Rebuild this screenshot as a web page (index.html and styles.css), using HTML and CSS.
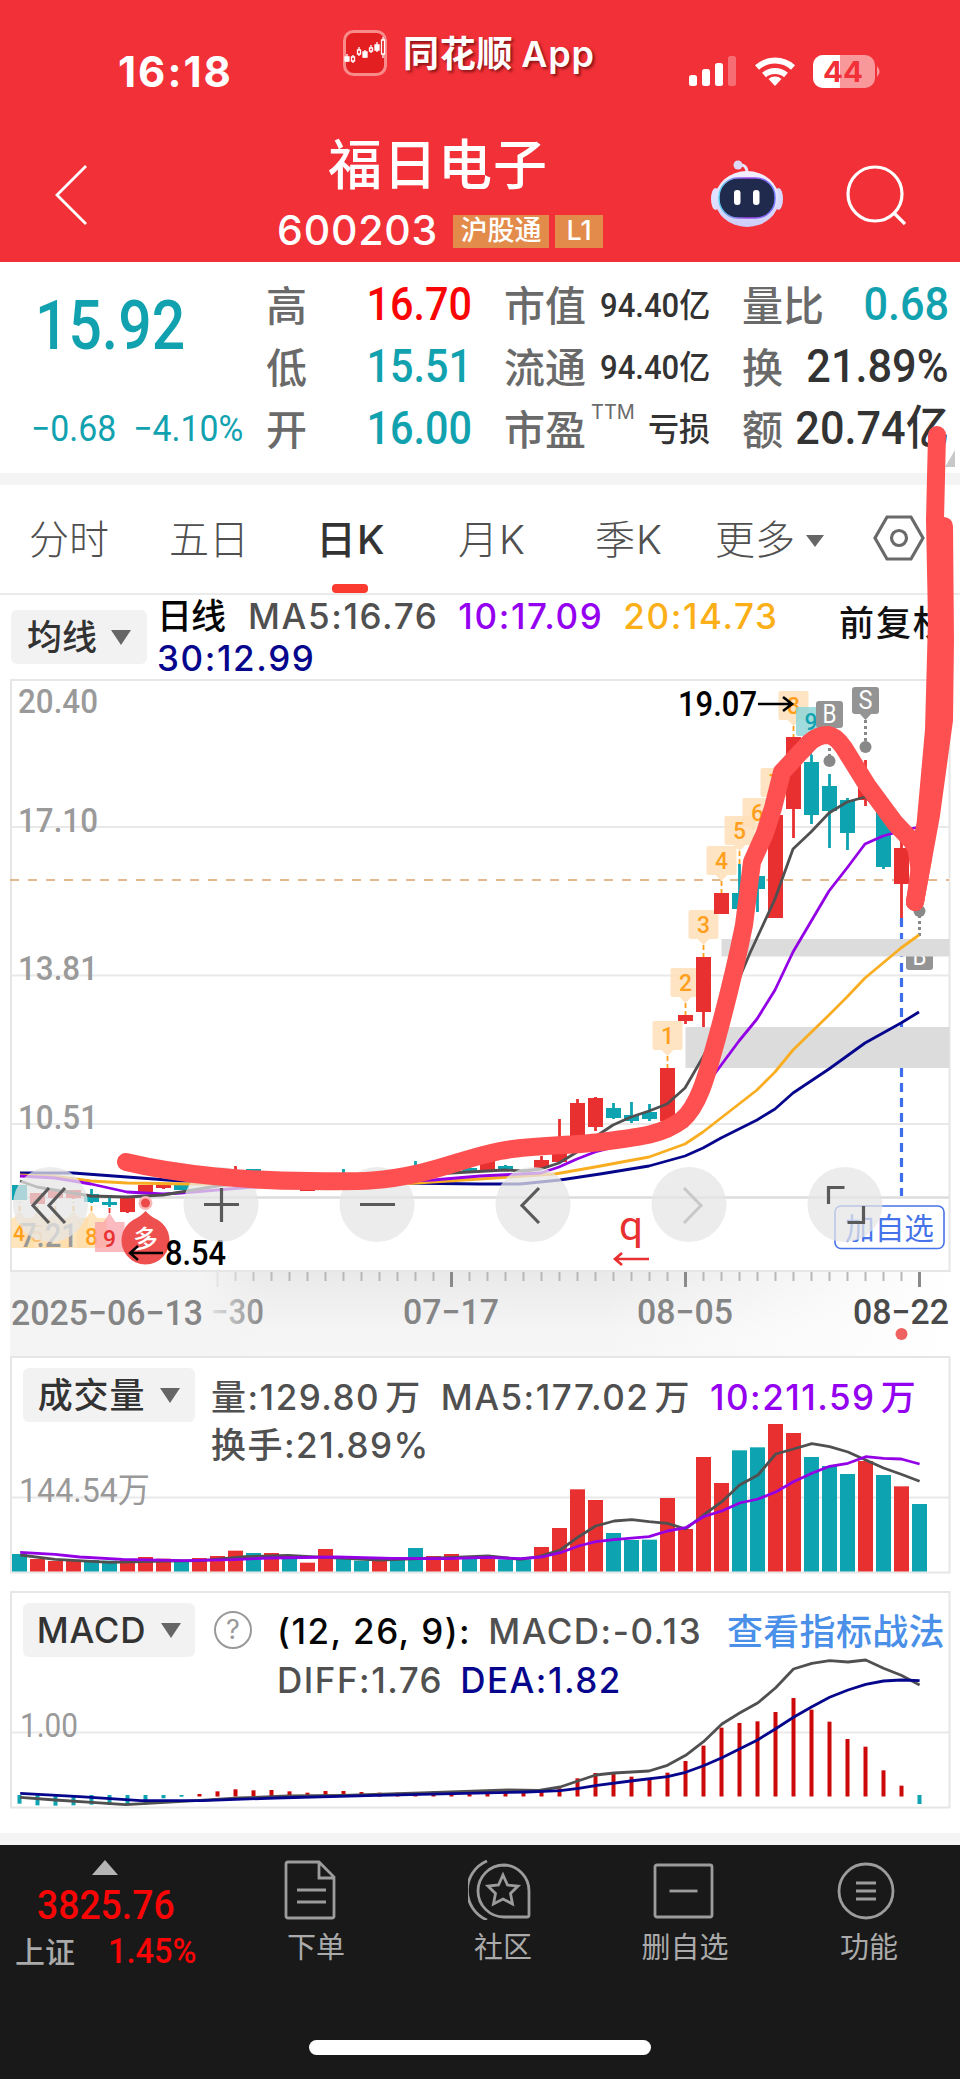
FILE: index.html
```html
<!DOCTYPE html>
<html lang="zh-CN">
<head>
<meta charset="utf-8">
<title>福日电子 600203</title>
<link rel="stylesheet" href="styles.css">
</head>
<body>
<div class="page">
  <header class="header">
    <div class="status">
      <div class="clock">16:18</div>
      <div class="brand">
        <svg class="brand-icon" viewBox="0 0 44 46"><rect x="1.5" y="1.5" width="41" height="43" rx="9" fill="#e31f22" stroke="#f98b8b" stroke-width="3"/><g stroke="#fff" stroke-width="1.3" fill="#e31f22"><path d="M4 24v8M10 25v8M16 17v9M22 20v8M28 15v8M34 12v10M40 7v21"/><path fill="#fff" d="M2 27h4v4H2zM20 22h4v5h-4zM32 15h4v5h-4z"/><path d="M8.500 27h3v4h-3zM14.500 20h3v4h-3zM26.500 18h3v3h-3zM38.500 10h3v14h-3z"/></g></svg>
        <span class="brand-name">同花顺 App</span>
      </div>
      <svg class="status-icons" viewBox="0 0 194 34">
        <g fill="#fff"><rect x="0" y="20" width="8" height="11" rx="2.500"/><rect x="13" y="14" width="8" height="17" rx="2.500"/><rect x="26" y="8" width="8" height="23" rx="2.500"/><rect x="39" y="1" width="8" height="30" rx="2.500" opacity=".3"/></g>
        <g fill="none" stroke="#fff" stroke-width="6"><path d="M68 12.500a27 27 0 0 1 36 0"/><path d="M75 20a17 17 0 0 1 22 0"/></g><path d="M79.500 24a10 10 0 0 1 13 0L86 31z" fill="#fff"/>
        <rect x="124" y="0" width="62" height="33" rx="10" fill="#fff" opacity=".5"/><path d="M151 0h-17a10 10 0 0 0-10 10v13a10 10 0 0 0 10 10h17z" fill="#fff"/><path d="M188 11q5 5.500 0 11z" fill="#fff" opacity=".5"/>
        <text x="134" y="26.500" font-family="Inter" font-size="28" font-weight="700" fill="#f23037" textLength="40" lengthAdjust="spacingAndGlyphs">44</text>
      </svg>
    </div>
    <div class="titlebar">
      <svg class="back" viewBox="0 0 36 62"><path d="M33 2L4 31l29 29" fill="none" stroke="#fff" stroke-width="2.800"/></svg>
      <div class="title">
        <div class="stock">福日电子</div>
        <div class="code-row"><span class="code">600203</span><span class="badge">沪股通</span><span class="badge badge-level">L1</span></div>
      </div>
      <svg class="robot" viewBox="0 0 74 68">
        <defs><linearGradient id="shell" x2="0" y2="1"><stop stop-color="#f4f0ff"/><stop offset="1" stop-color="#cdcdf8"/></linearGradient><linearGradient id="rim"><stop stop-color="#62d2f2"/><stop offset=".5" stop-color="#a044e8"/><stop offset="1" stop-color="#717cff"/></linearGradient></defs>
        <path d="M37 13q0-9-8-8" fill="none" stroke="#e9e4ff" stroke-width="3"/><circle cx="28" cy="5" r="4.500" fill="#dcdaf8"/>
        <ellipse cx="5.500" cy="39" rx="4.500" ry="11" fill="#e1dfff"/><ellipse cx="68.500" cy="39" rx="4.500" ry="11" fill="#d8d7fc"/>
        <ellipse cx="37" cy="39" rx="32" ry="28" fill="url(#shell)"/><rect x="9" y="18" width="56" height="40" rx="19" fill="#202a4c" stroke="url(#rim)" stroke-width="1.500"/><rect x="24" y="30" width="6.500" height="15" rx="3" fill="#fff"/><rect x="43" y="30" width="6.500" height="15" rx="3" fill="#fff"/>
      </svg>
      <svg class="search" viewBox="0 0 62 62"><g fill="none" stroke="#fff" stroke-width="3.200"><circle cx="29" cy="29" r="27"/><path d="M48 48l11 11"/></g></svg>
    </div>
  </header>

  <section class="quote">
    <div class="price-block">
      <div class="price num">15.92</div>
      <div class="change"><span>−0.68</span><span>−4.10%</span></div>
    </div>
    <div class="stats">
      <div class="stat s1"><span class="k">高</span><b class="num up">16.70</b></div>
      <div class="stat s2"><span class="k">市值</span><span class="small">94.40亿</span></div>
      <div class="stat s3"><span class="k">量比</span><b class="num down">0.68</b></div>
      <div class="stat s1"><span class="k">低</span><b class="num down">15.51</b></div>
      <div class="stat s2"><span class="k">流通</span><span class="small">94.40亿</span></div>
      <div class="stat s3"><span class="k">换</span><b class="num">21.89%</b></div>
      <div class="stat s1"><span class="k">开</span><b class="num down">16.00</b></div>
      <div class="stat s2"><span class="k">市盈<sup>TTM</sup></span><span class="small">亏损</span></div>
      <div class="stat s3"><span class="k">额</span><b class="num">20.74亿</b></div>
    </div>
    <i class="corner"></i>
  </section>

  <nav class="tabs">
    <span class="tab t1">分时</span><span class="tab t2">五日</span><span class="tab t3 active">日K</span><span class="tab t4">月K</span><span class="tab t5">季K</span><span class="tab t6">更多<i class="caret"></i></span>
    <svg class="gear" viewBox="0 0 52 46"><g fill="none" stroke="#6a6a6a" stroke-width="3.200"><path d="M14 2h24l12 21-12 21H14L2 23z"/><circle cx="26" cy="23" r="7.500"/></g></svg>
  </nav>

  <section class="indicators">
    <button class="picker">均线<i class="caret"></i></button>
    <div class="ma">
      <span class="c-black">日线</span><span class="c-gray">MA5:16.76</span><span class="c-purple">10:17.09</span><span class="c-gold">20:14.73</span><span class="c-navy">30:12.99</span>
    </div>
    <div class="adjust">前复权</div>
  </section>

  <svg class="kline" id="kline" viewBox="0 679 960 677"></svg>

  <section class="panel volume">
    <svg class="panel-chart" id="volume" viewBox="0 1356 960 218"></svg>
    <div class="panel-head">
      <button class="picker">成交量<i class="caret"></i></button>
      <div class="readout vol-readout"><span class="c-gray">量:129.80<em>万</em></span><span class="c-gray">MA5:177.02<em>万</em></span><span class="c-purple">10:211.59<em>万</em></span><span class="c-gray turnover">换手:21.89%</span></div>
    </div>
  </section>

  <section class="panel macd">
    <svg class="panel-chart" id="macd" viewBox="0 1591 960 218"></svg>
    <div class="panel-head">
      <button class="picker">MACD<i class="caret"></i></button>
      <span class="help">?</span>
      <div class="readout macd-readout"><span class="c-black">(12, 26, 9):</span><span class="c-gray">MACD:-0.13</span><span class="c-gray diff">DIFF:1.76</span><span class="c-navy">DEA:1.82</span></div>
      <a class="guide">查看指标战法</a>
    </div>
  </section>

  <footer class="bottom">
    <div class="bar">
      <div class="index">
        <i class="up-mark"></i>
        <div class="index-value">3825.76</div>
        <div class="index-row"><span>上证</span><b>1.45%</b></div>
      </div>
      <div class="action a1"><svg viewBox="0 0 64 60"><g fill="none" stroke="#9c9c9c" stroke-width="2.800"><path d="M8 2h30l15 15v39q0 2-2 2H7q-2 0-2-2V4q0-2 2-2zM38 2v16h15M16 30h29M16 42h29"/></g></svg><span>下单</span></div>
      <div class="action a2"><svg viewBox="1 0 64 60"><g fill="none" stroke="#9c9c9c" stroke-width="2.800"><path d="M20 1A32 32 0 0 0 20 60"/><path d="M37 5a26 26 0 1 0 0 52h23q2 0 2-2V31A26 26 0 0 0 37 5z"/><path d="M36 15l4.500 10 10.500 1-7.500 7.500 2 10.500-9.500-5-9.500 5 2-10.500L21 26l10.500-1z"/></g></svg><span>社区</span></div>
      <div class="action a3"><svg viewBox="-1.500 0 64 60"><g fill="none" stroke="#9c9c9c" stroke-width="2.800"><rect x="3.500" y="5" width="57" height="52" rx="2"/><path d="M18 31h28"/></g></svg><span>删自选</span></div>
      <div class="action a4"><svg viewBox="1 0 64 60"><g fill="none" stroke="#9c9c9c" stroke-width="2.800"><circle cx="33" cy="31" r="27"/><path d="M23 23h20M23 31h20M23 39h20"/></g></svg><span>功能</span></div>
    </div>
    <div class="home"></div>
  </footer>

  <svg class="drawing" viewBox="0 0 960 2079">
    <g fill="none" stroke="#fe5050" stroke-linecap="round" stroke-linejoin="round" stroke-width="18">
      <path d="M126 1162C180 1175 250 1181 310 1181C365 1182 385 1181 420 1173C450 1166 470 1157 500 1151C530 1145 570 1146 600 1142C640 1137 662 1135 682 1120C700 1105 708 1070 717 1038C730 990 738 955 744 925L752 862L765 833L773 808L782 772L810 742Q818 735 828 735Q836 736 844 748L867 785L895 823L911 840L923 858L915 902"/>
      <path d="M915 902L925 830L934 730L937 620L935 520L937 435"/>
      <path d="M915 902L931 815L944 720L945 640L944 526"/>
    </g>
    <path d="M905 833L913 838L928 780L937 700L940 700L935 820L915 900Z" fill="#fe5050"/>
  </svg>
</div>
<script src="charts.js"></script>
</body>
</html>
```

FILE: styles.css
```css
* { box-sizing: border-box; }
body { margin: 0; background: #fff; color: #333; font-family: Inter, "Noto Sans CJK SC", sans-serif; }
.page { position: relative; width: 960px; height: 2079px; overflow: hidden; display: flex; flex-direction: column; }
svg { display: block; flex: none; }
i, em { font-style: normal; }
.num { font-family: Roboto, "Noto Sans CJK SC", sans-serif; font-weight: 500; display: inline-block; white-space: nowrap; }
.up { color: #fa0505; }
.down { color: #12a2af; }

/* header */
.header { height: 262px; background: #f23037; color: #fff; flex: none; }
.status { height: 110px; display: flex; padding-left: 118px; }
.clock { width: 225px; padding-top: 47px; font-size: 42px; line-height: 50px; font-weight: 700; letter-spacing: 2px; }
.brand { width: 346px; display: flex; gap: 16px; padding-top: 31px; }
.brand-icon { width: 44px; height: 46px; margin-top: -1px; }
.brand-name { font-size: 36px; line-height: 46px; font-weight: 600; white-space: nowrap; letter-spacing: .8px; word-spacing: -2px; text-shadow: 2px 2px 3px rgba(60,0,0,.6); }
.status-icons { width: 194px; height: 34px; margin-top: 55px; }
.titlebar { height: 152px; display: flex; }
.back { width: 36px; height: 62px; margin: 54px 0 0 53px; }
.title { width: 622px; padding-top: 24px; }
.stock { font-size: 54px; line-height: 64px; margin-left: 239px; font-weight: 500; letter-spacing: 1px; }
.code-row { display: flex; align-items: center; margin: 8px 0 0 188px; height: 50px; }
.code { font-size: 41px; letter-spacing: .8px; width: 176px; font-weight: 500; margin-top: -2px; }
.badge { background: #e38b4a; height: 33px; line-height: 31px; font-size: 27px; width: 96px; text-align: center; margin-right: 6px; font-weight: 500; }
.badge-level { width: 48px; }
.robot { width: 74px; height: 68px; margin: 50px 62px 0 -1px; }
.search { width: 62px; height: 62px; margin-top: 55px; }

/* quote */
.quote { position: relative; height: 211px; display: flex; flex: none; }
.price-block { width: 266px; padding: 26px 0 0 35px; color: #12a2af; }
.price { font-size: 68px; line-height: 76px; transform: scaleX(.865); transform-origin: left; font-weight: 500; }
.change { display: flex; gap: 18px; margin: 43px 0 0 -4px; font: 400 36px/44px Roboto; white-space: nowrap; transform: scaleX(.94); transform-origin: left; }
.stats { width: 682px; display: grid; grid-template-columns: 205px 239px 238px; grid-template-rows: 62px 62px 62px; padding-top: 13px; }
.stat { display: flex; justify-content: space-between; align-items: center; white-space: nowrap; }
.s2 { padding-left: 33px; }
.s3 { padding-left: 32px; }
.k { color: #6a6a6a; font-size: 41px; line-height: 56px; font-weight: 500; }
.k sup { display: inline-block; font: 400 20px/20px Inter; margin-left: 5px; vertical-align: 26px; }
.stat .num { font-size: 47px; line-height: 56px; transform: scaleX(.88); transform-origin: right; margin: -4px -1px 0 -40px; }
.s3 .num { transform: scaleX(.92); }
.small { font: 500 33px/40px Roboto, "Noto Sans CJK SC"; transform: scaleX(.94); transform-origin: right; }
.corner { position: absolute; right: 5px; bottom: 6px; border-left: 10px solid transparent; border-bottom: 17px solid #c8c8c8; }

/* period tabs */
.tabs { height: 122px; flex: none; display: flex; border-top: 12px solid #f4f4f4; border-bottom: 2px solid #ebebeb; font-weight: 300; font-size: 40px; line-height: 110px; color: #505050; padding-left: 29px; white-space: nowrap; }
.tab { position: relative; }
.t1 { width: 140px; }
.t2 { width: 147px; }
.t3 { width: 142px; letter-spacing: 1px; }
.t4 { width: 137px; letter-spacing: 1px; }
.t5 { width: 120px; letter-spacing: 1px; }
.t6 { width: 158px; }
.active { color: #333; font-weight: 500; }
.active::after { content: ""; position: absolute; left: 16px; bottom: 0; width: 36px; height: 9px; border-radius: 4px; background: #fb3a30; }
.caret { display: inline-block; border: 10px solid transparent; border-top: 15px solid #666; border-bottom: 0; }
.tab .caret { border-width: 12px 9px 0; margin-left: 11px; vertical-align: 7px; }
.gear { width: 52px; height: 46px; margin-top: 30px; }

/* indicator readouts */
.indicators { height: 84px; flex: none; display: flex; padding-left: 11px; }
.picker { border: 0; border-radius: 6px; background: #f2f2f2; height: 54px; padding: 0; color: #333; font: 500 35px/52px Inter, "Noto Sans CJK SC"; display: flex; align-items: center; justify-content: center; gap: 14px; flex: none; white-space: nowrap; }
.indicators .picker { width: 136px; margin-top: 15px; }
.ma { width: 682px; margin-left: 10px; display: flex; flex-wrap: wrap; column-gap: 20px; font-size: 35px; line-height: 42px; letter-spacing: 1.6px; font-weight: 500; white-space: nowrap; height: 84px; align-content: flex-start; }
.ma span { height: 42px; }
.ma .c-black { letter-spacing: -1px; margin-right: 3px; }
.adjust { font-size: 35px; line-height: 56px; letter-spacing: 2px; color: #111; font-weight: 500; white-space: nowrap; }
.c-black { color: #050505; }
.c-gray { color: #505050; }
.c-purple { color: #9400f0; }
.c-gold { color: #fbaf18; }
.c-navy { color: #06068c; }
.kline { width: 960px; height: 677px; }

/* lower panels */
.panel { height: 218px; flex: none; display: grid; }
.panel-chart, .panel-head { grid-area: 1 / 1; }
.panel-chart { width: 960px; height: 218px; }
.panel-head { display: flex; padding: 12px 0 0 23px; }
.panel .picker { width: 172px; gap: 15px; letter-spacing: .8px; }
.readout { display: flex; flex-wrap: wrap; font-size: 35px; line-height: 48px; letter-spacing: 1.5px; font-weight: 500; white-space: nowrap; align-content: flex-start; }
.readout em { margin-left: 5px; }
.vol-readout { width: 740px; margin: 5px 0 0 16px; column-gap: 19px; letter-spacing: 1.5px; }
.macd { margin-top: 17px; }
.help { width: 38px; height: 38px; border: 2.5px solid #999; border-radius: 50%; color: #999; font-size: 27px; line-height: 33px; text-align: center; margin: 8px 0 0 19px; flex: none; }
.macd-readout { width: 442px; margin: 4px 0 0 25px; column-gap: 17px; flex: none; }
.macd-readout span { line-height: 49px; }
.guide { font-size: 36px; line-height: 52px; color: #4a90e8; margin: 3px 0 0 8px; font-weight: 500; white-space: nowrap; letter-spacing: .3px; }

/* bottom bar */
.bottom { margin-top: 24px; height: 246px; flex: none; border-top: 12px solid #f4f4f4; background: #191919; color: #aaa; }
.bar { height: 195px; display: flex; }
.index { width: 210px; padding-top: 15px; }
.up-mark { display: block; width: 26px; margin-left: 92px; border: 13px solid transparent; border-top: 0; border-bottom: 15px solid #b5b5b5; }
.index-value { font: 500 41px/50px Roboto; color: #fa0505; margin: 5px 0 0 37px; transform: scaleX(.91); transform-origin: left; }
.index-row { display: flex; margin-left: 15px; align-items: center; font-size: 30px; line-height: 40px; padding-top: 2px; }
.index-row span { width: 93px; font-weight: 500; }
.index-row b { font: 500 35px/40px Roboto; color: #fa0505; transform: scaleX(.93); transform-origin: left; }
.action { width: 110px; text-align: center; font-size: 29px; line-height: 40px; font-weight: 400; padding-top: 15px; }
.action svg { width: 64px; height: 60px; margin: 0 20px 8px; }
.a1 { margin-left: 51px; }
.a2 { margin-left: 77px; }
.a3 { margin-left: 72px; }
.a4 { margin-left: 74px; }
.home { width: 342px; height: 15px; border-radius: 8px; margin-left: 309px; background: #fff; }
.drawing { position: absolute; left: 0; top: 0; width: 960px; height: 2079px; pointer-events: none; }
```

FILE: charts.js
```js
const RED = '#e93030', TEAL = '#0ea3b0', GRAY = '#505050', PURPLE = '#9400e6', GOLD = '#f9ae22', NAVY = '#06068c';
const X = i => 19.5 + 18 * i;
const rect = (x, y, w, h, fill, extra = '') => `<rect x="${x}" y="${y}" width="${w}" height="${h}" fill="${fill}" ${extra}/>`;
const path = (d, stroke, w, extra = '') => `<path d="${d}" fill="none" stroke="${stroke}" stroke-width="${w}" ${extra}/>`;
const line = (pts, c, w = 2.8) => `<polyline points="${pts}" fill="none" stroke="${c}" stroke-width="${w}" stroke-linejoin="round"/>`;
const text = (s, x, y, w, size, fill, extra = '') => `<text x="${x}" y="${y}" textLength="${w}" lengthAdjust="spacingAndGlyphs" font-family="Roboto, 'Noto Sans CJK SC'" font-size="${size}" fill="${fill}" ${extra}>${s}</text>`;
const MEDIUM = 'font-weight="500"';

/* candles: index, body top, body bottom, wick top, wick bottom, rising */
const candles = [
  [0,1185,1200,1185,1200,0],[1,1193,1204,1193,1204,1],[2,1191,1198,1191,1198,1],[3,1190,1198,1190,1199,1],
  [4,1194,1202,1189,1203,0],[5,1202,1205,1195,1207,0],[6,1198,1212,1198,1213,1],[7,1185,1192,1185,1192,1],
  [8,1185,1188,1185,1189,1],[9,1185,1190,1185,1190,0],[12,1174,1186,1166,1186,1],[13,1169,1175,1169,1176,0],
  [16,1180,1191,1179,1191,1],[18,1175,1182,1169,1183,0],[22,1170,1178,1161,1179,0],[24,1170,1174,1168,1174,1],
  [25,1168,1173,1167,1173,0],[26,1160,1172,1160,1172,1],[27,1166,1170,1165,1171,0],[28,1170,1172,1169,1173,0],
  [29,1160,1168,1156,1168,1],[30,1146,1162,1119,1162,1],[31,1103,1139,1099,1139,1],[32,1098,1127,1097,1131,1],
  [33,1108,1118,1103,1119,0],[34,1115,1121,1102,1123,0],[35,1112,1119,1104,1121,0],[36,1068,1121,1068,1121,1],
  [37,1015,1021,1015,1024,1],[38,957,1012,957,1027,1],[39,893,914,893,914,1],[40,893,909,864,913,0],
  [41,876,889,870,912,0],[42,815,918,815,918,1],[43,737,809,737,838,1],[44,762,815,755,824,0],
  [45,786,811,774,848,0],[46,800,833,798,850,0],[47,785,800,760,806,1],[48,811,867,811,869,0],
  [49,848,884,838,918,1]
];
const callout = (s, x, y, dot, box = '#ffdfb8', ink = '#ff9f1c') =>
  `<path d="M${x-13} ${y}h26q2 0 2 2v25q0 2-2 2h-7l-6 6-6-6h-7q-2 0-2-2v-25q0-2 2-2z" fill="${box}" fill-opacity=".85"/>` +
  path(`M${x} ${y + 35}V${dot}`, ink, 1.8, 'stroke-dasharray="5 3"') +
  text(s, x - 6.5, y + 23, 13, 24, ink, MEDIUM);
const flag = (s, x, y) => rect(x - 13.5, y, 27, 27, '#949494', 'rx="3"') + text(s, x - 7, y + 22, 14, 25, '#fff');

let k = `<defs><linearGradient id="axis" x2="0" y2="1"><stop stop-color="#e9e9e9"/><stop offset=".7" stop-color="#f5f5f5"/><stop offset="1" stop-color="#f6f6f6"/></linearGradient><linearGradient id="fadeR"><stop stop-color="#fff" stop-opacity="0"/><stop offset="1" stop-color="#fff"/></linearGradient><linearGradient id="fadeL"><stop offset=".7" stop-color="#f4f4f4"/><stop offset=".92" stop-color="#f4f4f4" stop-opacity=".1"/><stop offset="1" stop-color="#f4f4f4" stop-opacity="0"/></linearGradient></defs>`;
k += rect(10, 1271, 941, 85, 'url(#axis)') + rect(600, 1272, 351, 84, 'url(#fadeR)');
for (let i = 11; i <= 50; i++) {
  const major = i === 24 || i === 37 || i === 50;
  k += path(`M${X(i)} 1271V${major || i === 11 ? 1287 : 1281}`, major ? '#8a8a8a' : '#b8b8b8', major ? 3 : 2);
}
k += text('−30', 211, 1324, 53, 35, '#858585', MEDIUM);
k += rect(10, 1272, 270, 84, 'url(#fadeL)');
k += text('2025−06−13', 11, 1325, 192, 35, '#858585', MEDIUM) + text('07−17', 403, 1324, 96, 35, '#858585', MEDIUM) + text('08−05', 637, 1324, 96, 35, '#858585', MEDIUM) + text('08−22', 853, 1324, 96, 35, '#4a4a4a', MEDIUM);
k += `<circle cx="901.5" cy="1334" r="6" fill="#f06262"/>`;
k += rect(11, 680, 938.5, 591, '#fff', 'stroke="#e6e6e6" stroke-width="2"');
for (const y of [827, 975.5, 1124]) k += path(`M12 ${y}H949`, '#e9e9e9', 2);
k += path('M12 1197.5H949', '#dcdcdc', 2.5);
[['20.40',18,713,80],['17.10',18,832,80],['13.81',18,980,80],['10.51',18,1129,80]].forEach(([s,x,y,w]) => k += text(s, x, y, w, 34, '#9a9a9a', MEDIUM));
k += path('M901.5 918V1196', '#3c6fe8', 3.2, 'stroke-dasharray="9 6"');
k += flag('B', 919.5, 943) + path('M919.5 915V939', '#888', 3, 'stroke-dasharray="3 3"');
k += rect(721.5, 939, 228, 17.5, '#dcdcdc') + rect(685.5, 1027, 264, 41, '#dcdcdc');
k += path('M10 880H949', '#dda36b', 1.6, 'stroke-dasharray="9 9"');
[['1',36,1021,1068],['2',37,968,1015],['3',38,910,957],['4',39,846,893],['5',40,816,864],['6',41,798,850],['7',42,768,810],['8',43,691,737]].forEach(([s,i,y,d]) => k += callout(s, X(i), y, d));
k += callout('9', X(44) - 0.5, 707, 755, '#8fd6d8', '#12a2af');
[0, 1, 2, 3, 4].forEach(i => {
  const left = Math.max(X(i) - 15, 11);
  k += `<path d="M${left} 1218H${X(i) - 6}l6-7 6 7h9v30H${left}z" fill="#ffdca8" fill-opacity=".75"/>` + path(`M${X(i)} 1211v-9`, '#f5a53c', 1.8, 'stroke-dasharray="5 3"');
});
k += text('5', 30, 1242, 13, 24, '#f8bd75') + text('7.21', 20, 1247, 58, 34, '#999', MEDIUM);
k += text('4', 13, 1241, 12, 23, '#ff9f1c', MEDIUM) + text('8', 85, 1245, 13, 24, '#ff9f1c', MEDIUM);
k += `<path d="M95 1222h8.500l6-9 6 9h9v30H95z" fill="#fa9ca4" fill-opacity=".7"/>` + path('M109.500 1213v-8', '#e93030', 1.8, 'stroke-dasharray="5 3"') + text('9', 103, 1247, 13, 24, '#e93030', MEDIUM);
for (const [i, t, b, wt, wb, up] of candles) {
  const c = up ? RED : TEAL;
  k += rect(X(i) - 7.5, t, 15, b - t, c) + rect(X(i) - 1.4, wt, 2.8, wb - wt, c);
}
k += line('20,1173 73,1173 127,1177 181,1181 400,1183 480,1184 520,1184 560,1180 600,1174 649,1166 685,1156 703,1148 721,1138 757,1120 775,1109 793,1093 829,1069 865,1043 901,1023 919,1012', NAVY);
k += line('20,1175 60,1177 91,1181 127,1183 190,1184 400,1184 480,1179 555,1174 595,1167 649,1157 685,1144 703,1132 721,1118 757,1090 775,1072 793,1050 829,1015 847,997 865,978 901,948 919,935', GOLD);
k += line('20,1176 55,1178 91,1184 127,1192 163,1194 181,1193 253,1187 433,1180 480,1176 541,1173 559,1167 577,1159 595,1152 649,1138 685,1110 713,1076 739,1041 757,1019 775,990 793,952 829,891 847,868 865,844 883,836 901,831 919,827', PURPLE);
k += line('20,1181 37,1187 55,1190 91,1196 127,1197 163,1195 181,1192 217,1186 270,1180 360,1179 451,1173 505,1170 523,1171 541,1169 559,1163 577,1152 595,1137 613,1125 631,1117 649,1111 667,1104 685,1088 703,1057 730,1000 750,953 775,899 793,849 811,832 829,813 847,802 865,797 883,812 901,836', GRAY);
k += flag('B', 829.5, 701) + flag('S', 865.5, 687);
k += `<path d="M859 713h13l-6.500 7z" fill="#949494"/>` + path('M865.5 720V742M829.5 748V756', '#888', 3, 'stroke-dasharray="3 3"');
k += `<g fill="#888"><circle cx="865.5" cy="747" r="6"/><circle cx="829.5" cy="761" r="6"/><circle cx="919.5" cy="911" r="6"/></g>`;
k += text('19.07', 678, 716, 79, 35, '#000', MEDIUM) + path('M758 704h34M783 697l9 7-9 7', '#000', 2.6);
k += `<circle cx="145.5" cy="1203" r="7" fill="#f9b9b9"/><circle cx="145.5" cy="1203" r="4.500" fill="#ed4a4a"/><path d="M145.500 1211Q151 1217 158 1220A24 24 0 1 1 133 1220Q140 1217 145.500 1211z" fill="#ee5050"/>`;
k += text('多', 133, 1248, 25, 25, '#fff', MEDIUM);
k += path('M163 1253H130M138 1246l-8 7 8 7', '#000', 2.4) + text('8.54', 165, 1265, 61, 35, '#000', MEDIUM);
k += rect(835, 1206, 109, 42.5, '#fff', 'rx="6" stroke="#4672ea" stroke-width="1.6"') + text('加自选', 845, 1239, 89, 30, '#4672ea');
k += text('q', 619, 1240, 24, 40, '#e93030') + path('M649 1259H615M622 1253l-7 6 7 6', '#e93030', 2.6);
for (const x of [50.5, 221, 377, 533, 689, 845]) k += `<circle cx="${x}" cy="1204.500" r="37.500" fill="#e6e6e6" fill-opacity=".74"/>`;
k += path('M49 1188L33 1205.500L49 1223M65 1188L49 1205.500L65 1223M204 1204.500h35M221.500 1188v34M360 1204.500h35M539 1188L522 1205.500L539 1223', '#5a5a5a', 3.2);
k += path('M684 1188L701 1205.500L684 1223', '#c8c8c8', 3) + path('M828.500 1204v-16.500h16M863.500 1206v16.500h-16', '#5a5a5a', 3.2);
document.getElementById('kline').innerHTML = k;

/* series sampled on a 1.633 x 3 grid, origin at the given panel y */
const series = (s, y0) => s.split(' ').map(p => { const [x, y] = p.split(','); return (x / 1.6333).toFixed(1) + ',' + (y0 + y / 3).toFixed(1); }).join(' ');
const vol = [612,627,633,630,630,632,630,621,626,633,624,618,602,609,609,620,638,597,622,632,628,624,594,618,612,624,624,628,628,591,534,418,450,549,570,569,444,537,321,399,301,292,222,249,321,348,372,333,375,409,462];
const falling = new Set([0,4,5,9,13,15,18,19,21,22,25,27,28,33,34,35,40,41,44,45,46,48,50]);
let v = rect(11, 1357, 938.5, 215.5, 'none', 'stroke="#e6e6e6" stroke-width="2"') + path('M12 1497.500H949', '#e9e9e9', 2) + text('144.54万', 19, 1502, 131, 34, '#999');
vol.forEach((y, i) => { v += rect(X(i) - 7.5, 1350 + y / 3, 15, 221.5 - y / 3, falling.has(i) ? TEAL : RED); });
v += line(series('33,615 90,628 180,637 270,633 330,632 400,620 470,616 530,622 620,630 740,622 797,618 850,628 880,620 915,600 945,560 973,528 1003,513 1032,509 1060,515 1090,520 1120,537 1149,495 1179,455 1208,405 1238,375 1267,312 1296,297 1326,281 1355,290 1385,306 1414,330 1443,354 1472,373 1502,394', 1350), GRAY);
v += line(series('33,607 90,613 130,621 200,628 300,632 380,629 440,624 550,621 640,625 730,626 797,622 850,626 885,621 915,608 945,588 973,575 1003,569 1060,560 1090,543 1120,533 1149,500 1179,483 1208,459 1238,447 1267,426 1296,395 1326,370 1355,349 1385,340 1414,320 1443,325 1472,327 1502,342', 1350), PURPLE);
document.getElementById('volume').innerHTML = v;

const hist = [641,646,647,646,644,645,646,643,625,620,612,604,598,601,600,604,608,603,603,606,608,608,606,604,603,604,606,605,604,601,595,565,549,552,560,568,548,513,467,413,399,394,366,324,359,395,447,470,541,587,642];
let m = rect(11, 1592, 938.5, 215.5, 'none', 'stroke="#e6e6e6" stroke-width="2"') + path('M12 1732.500H949', '#e9e9e9', 2) + text('1.00', 20, 1737, 58, 34, '#999');
hist.forEach((y, i) => {
  const up = i > 9 && i < 50;
  m += up ? rect(X(i) - 2, 1590 + y / 3, 4, 206.5 - y / 3, '#cc0808') : rect(X(i) - 2, 1795, 4, y / 3 - 205, TEAL);
});
m += line(series('33,622 90,630 150,637 205,644 270,637 320,632 390,624 470,618 560,616 700,608 830,600 880,601 915,591 945,572 973,555 1003,549 1060,543 1090,526 1120,496 1149,455 1179,402 1208,369 1238,338 1267,293 1296,237 1326,220 1355,212 1385,216 1414,210 1443,235 1472,256 1502,285', 1590), GRAY);
m += line(series('33,610 130,620 230,632 330,632 450,624 600,617 740,611 860,606 915,602 945,595 975,586 1030,573 1090,560 1120,547 1149,527 1179,503 1238,449 1267,416 1296,382 1326,350 1355,322 1385,300 1414,283 1443,273 1472,270 1502,272', 1590), NAVY);
document.getElementById('macd').innerHTML = m;
```
